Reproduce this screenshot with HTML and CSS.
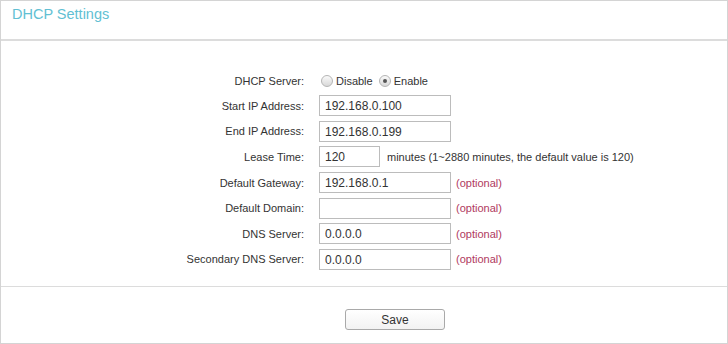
FILE: index.html
```html
<!DOCTYPE html>
<html lang="en">
  <head>
    <meta charset="UTF-8" />
    <meta name="viewport" content="width=device-width, initial-scale=1.0" />
    <title>DHCP Settings</title>
    <link rel="stylesheet" href="styles.css">
  </head>
  <body>
    <div class="panel">
      <div class="panel-head">
        <h1>DHCP Settings</h1>
      </div>

      <div class="panel-body">
        <div class="row row-radio">
          <label class="label">DHCP Server:</label>
          <div class="field">
            <span class="radio"></span><span class="radio-text">Disable</span>
            <span class="radio checked"></span><span class="radio-text">Enable</span>
          </div>
        </div>
        <div class="row">
          <label class="label">Start IP Address:</label>
          <div class="field"><input class="text" type="text" value="192.168.0.100"></div>
        </div>
        <div class="row">
          <label class="label">End IP Address:</label>
          <div class="field"><input class="text" type="text" value="192.168.0.199"></div>
        </div>
        <div class="row">
          <label class="label">Lease Time:</label>
          <div class="field">
            <input class="text short" type="text" value="120">
            <span class="hint">minutes (1~2880 minutes, the default value is 120)</span>
          </div>
        </div>
        <div class="row">
          <label class="label">Default Gateway:</label>
          <div class="field">
            <input class="text" type="text" value="192.168.0.1">
            <span class="optional">(optional)</span>
          </div>
        </div>
        <div class="row">
          <label class="label">Default Domain:</label>
          <div class="field">
            <input class="text" type="text" value="">
            <span class="optional">(optional)</span>
          </div>
        </div>
        <div class="row">
          <label class="label">DNS Server:</label>
          <div class="field">
            <input class="text" type="text" value="0.0.0.0">
            <span class="optional">(optional)</span>
          </div>
        </div>
        <div class="row">
          <label class="label">Secondary DNS Server:</label>
          <div class="field">
            <input class="text" type="text" value="0.0.0.0">
            <span class="optional">(optional)</span>
          </div>
        </div>
      </div>

      <div class="panel-foot">
        <button class="save-button">Save</button>
      </div>
    </div>
  </body>
</html>
```

FILE: styles.css
```css
body {
  margin: 0;
  font-family: "Liberation Sans", Arial, sans-serif;
  color: #333;
  background: #fff;
}
.panel {
  width: 728px;
  height: 344px;
  box-sizing: border-box;
  border: 1px solid #d4d4d4;
  display: flex;
  flex-direction: column;
}
.panel-head {
  height: 38px;
  border-bottom: 2px solid #dcdcdc;
  padding-left: 11px;
}
.panel-head h1 {
  margin: 0;
  padding-top: 3px;
  font-size: 14.5px;
  font-weight: normal;
  color: #62bfd3;
  line-height: 20px;
}
.panel-body {
  padding-top: 28px;
  height: 217px;
  border-bottom: 1px solid #dcdcdc;
}
.row {
  display: flex;
  align-items: center;
  height: 25.6px;
}
.row-radio {
  height: 24px;
}
.label {
  width: 303px;
  text-align: right;
  font-size: 11px;
  color: #333;
}
.field {
  margin-left: 15px;
  display: flex;
  align-items: center;
  font-size: 11px;
}
.text {
  width: 132px;
  height: 21px;
  box-sizing: border-box;
  border: 1px solid #bcbcbc;
  padding: 1px 0 0 5px;
  font-family: "Liberation Sans", Arial, sans-serif;
  font-size: 12px;
  color: #333;
  outline: none;
}
.text.short {
  width: 61px;
}
.hint {
  margin-left: 7px;
}
.optional {
  margin-left: 5px;
  color: #b0395e;
}
.radio {
  width: 10px;
  height: 10px;
  border-radius: 50%;
  border: 1px solid #b5b5b5;
  background: linear-gradient(#fafafa, #d8d8d8);
  margin: 0 3px 0 2px;
  position: relative;
}
.radio.checked {
  margin-left: 6px;
}
.radio.checked::after {
  content: "";
  position: absolute;
  left: 3px;
  top: 3px;
  width: 4px;
  height: 4px;
  border-radius: 50%;
  background: #555;
}
.panel-foot {
  flex: 1;
  display: flex;
  justify-content: center;
  padding-top: 22px;
  padding-left: 62px;
}
.save-button {
  width: 100px;
  height: 21px;
  padding: 0;
  border: 1px solid #a9a9a9;
  border-radius: 3px;
  background: linear-gradient(#ffffff, #f2f2f2);
  font-family: "Liberation Sans", Arial, sans-serif;
  font-size: 12px;
  color: #333;
  cursor: pointer;
}
```
